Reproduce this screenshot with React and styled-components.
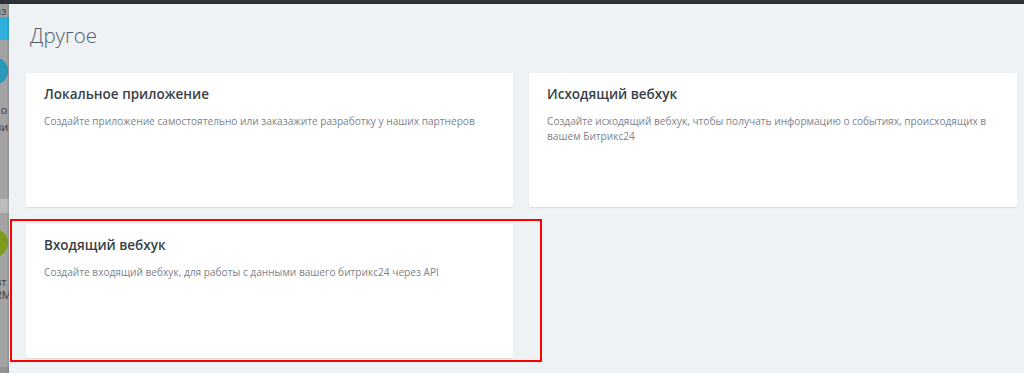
import React from "react";
import styled, { createGlobalStyle } from "styled-components";

const GlobalStyle = createGlobalStyle`
  html, body { margin: 0; padding: 0; }
  body {
    background: #eef2f4;
    font-family: "Open Sans", "Noto Sans", sans-serif;
    overflow: hidden;
  }
`;

const Page = styled.div`
  display: flex;
  flex-direction: column;
  width: 1024px;
  height: 373px;
  overflow: hidden;
`;

const TopBar = styled.div`
  height: 4px;
  flex: none;
  background: #2e3136;
`;

const Body = styled.div`
  flex: 1;
  display: flex;
  min-height: 0;
`;

/* dimmed page behind the slider */
const Backdrop = styled.div`
  width: 9px;
  flex: none;
  display: flex;
  flex-direction: column;
  overflow: hidden;
  background: #a3a3a3;
`;

const Band = styled.div`
  flex: none;
  height: ${(p) => p.$h}px;
  background: ${(p) => p.$bg || "#a3a3a3"};
  display: flex;
  flex-direction: column;
  overflow: hidden;
  padding-top: ${(p) => p.$pt || 0}px;
`;

const Circle = styled.div`
  width: 28px;
  height: 28px;
  border-radius: 50%;
  margin-left: -20px;
  flex: none;
  background: ${(p) => p.$c};
`;

const Fragment = styled.span`
  font-family: "Open Sans", sans-serif;
  font-size: 11px;
  line-height: 13px;
  color: #3b3b3b;
  white-space: nowrap;
  margin-left: ${(p) => p.$ml || -4}px;
  margin-top: ${(p) => p.$mt || 0}px;
`;

const Panel = styled.div`
  flex: 1;
  background: #eef2f4;
  padding: 0 7px 0 17px;
  box-shadow: -1px 0 2px rgba(0, 0, 0, 0.15);
  display: flex;
  flex-direction: column;
`;

const Title = styled.h1`
  margin: 16px 0 23px 4px;
  font-size: 20.5px;
  line-height: 30px;
  font-weight: 300;
  color: #535c69;
`;

const Grid = styled.div`
  display: grid;
  grid-template-columns: 487px 488px;
  grid-auto-rows: 134px;
  column-gap: 16px;
  row-gap: 17px;
`;

const Card = styled.div`
  position: relative;
  background: #fff;
  padding: 12px 17px 0 18px;
  box-shadow: 0 1px 1px rgba(0, 0, 0, 0.08);
`;

const CardTitle = styled.div`
  font-size: 13.5px;
  line-height: 18px;
  font-weight: 600;
  color: #3a3f47;
`;

const CardText = styled.div`
  margin-top: 11px;
  font-size: 10.15px;
  line-height: 15px;
  color: #7d838b;
`;

const Highlight = styled.div`
  position: absolute;
  left: -16px;
  top: -5px;
  right: -29px;
  bottom: -4px;
  border: 2px solid #ff0000;
  pointer-events: none;
`;

const cards = [
  {
    title: "Локальное приложение",
    text: "Создайте приложение самостоятельно или заказажите разработку у наших партнеров",
  },
  {
    title: "Исходящий вебхук",
    text: "Создайте исходящий вебхук, чтобы получать информацию о событиях, происходящих в вашем Битрикс24",
  },
  {
    title: "Входящий вебхук",
    text: "Создайте входящий вебхук, для работы с данными вашего битрикс24 через API",
    marked: true,
  },
];

export default function App() {
  return (
    <>
      <GlobalStyle />
      <Page>
        <TopBar />
        <Body>
          <Backdrop>
            <Band $h={13} $bg="#9f9f9f">
              <Fragment $ml={-5}>аз</Fragment>
            </Band>
            <Band $h={23} $bg="#2fb0dc" />
            <Band $h={142} $pt={17}>
              <Circle $c="#2a98ba" />
              <Fragment $ml={-5} $mt={18}>ко</Fragment>
              <Fragment $ml={-5} $mt={4}>ли</Fragment>
            </Band>
            <Band $h={14} $bg="#bcbcbc" />
            <Band $h={138} $pt={16}>
              <Circle $c="#7d9c1c" />
              <Fragment $ml={-5} $mt={18}>вт</Fragment>
              <Fragment $ml={-5} $mt={0}>RM</Fragment>
            </Band>
            <Band $h={14} $bg="#939393" />
            <Band $h={30} $pt={10}>
              <Circle $c="#c98f22" />
            </Band>
          </Backdrop>
          <Panel>
            <Title>Другое</Title>
            <Grid>
              {cards.map((c) => (
                <Card key={c.title}>
                  <CardTitle>{c.title}</CardTitle>
                  <CardText>{c.text}</CardText>
                  {c.marked && <Highlight />}
                </Card>
              ))}
            </Grid>
          </Panel>
        </Body>
      </Page>
    </>
  );
}
